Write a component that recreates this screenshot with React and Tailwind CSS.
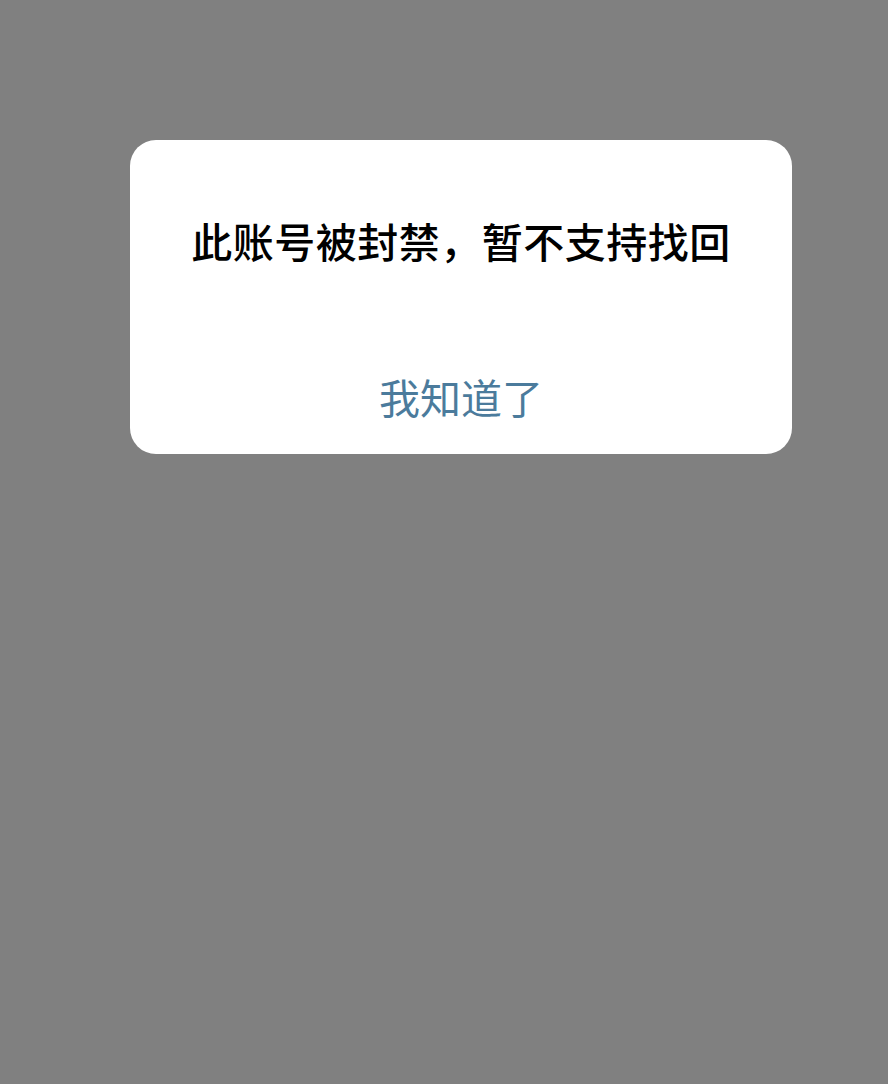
export default function App() {
  return (
    <div className="min-h-[1084px] w-full bg-[#808080] pt-[140px]" style={{ fontFamily: '"Noto Sans CJK SC", "Noto Sans", sans-serif' }}>
      <div className="ml-[130px] w-[662px] h-[314px] rounded-[26px] bg-white flex flex-col items-center pt-[80px]">
        <div className="text-[41px] leading-[41px] text-black font-medium tracking-[0.5px]">此账号被封禁，暂不支持找回</div>
        <div className="mt-[115px] text-[41px] leading-[41px] text-[#4b7b9c] font-normal">我知道了</div>
      </div>
    </div>
  );
}
